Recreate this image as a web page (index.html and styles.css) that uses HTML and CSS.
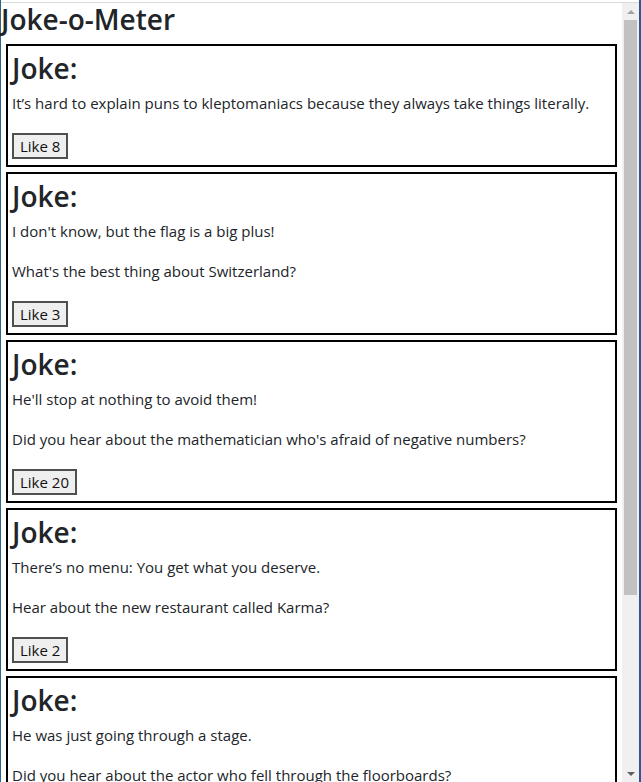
FILE: index.html
```html
<!DOCTYPE html>
<html lang="en">
<head>
<meta charset="utf-8">
<title>Joke-o-Meter</title>
<link rel="stylesheet" href="styles.css">
</head>
<body>
<div class="window">
  <div class="window-body">
    <main class="content">
      <h1 class="app-title">Joke-o-Meter</h1>
      <section class="joke">
        <h2 class="joke-title">Joke:</h2>
        <p class="joke-text">It’s hard to explain puns to kleptomaniacs because they always take things literally.</p>
        <button class="like-btn">Like 8</button>
      </section>
      <section class="joke">
        <h2 class="joke-title">Joke:</h2>
        <p class="joke-text">I don't know, but the flag is a big plus!</p>
        <p class="joke-text">What's the best thing about Switzerland?</p>
        <button class="like-btn">Like 3</button>
      </section>
      <section class="joke">
        <h2 class="joke-title">Joke:</h2>
        <p class="joke-text">He'll stop at nothing to avoid them!</p>
        <p class="joke-text">Did you hear about the mathematician who's afraid of negative numbers?</p>
        <button class="like-btn">Like 20</button>
      </section>
      <section class="joke">
        <h2 class="joke-title">Joke:</h2>
        <p class="joke-text">There’s no menu: You get what you deserve.</p>
        <p class="joke-text">Hear about the new restaurant called Karma?</p>
        <button class="like-btn">Like 2</button>
      </section>
      <section class="joke">
        <h2 class="joke-title">Joke:</h2>
        <p class="joke-text">He was just going through a stage.</p>
        <p class="joke-text">Did you hear about the actor who fell through the floorboards?</p>
        <button class="like-btn">Like 5</button>
      </section>
    </main>
    <div class="scrollbar" aria-hidden="true">
      <div class="sb-arrow"><span class="tri-up"></span></div>
      <div class="sb-track">
        <div class="sb-thumb"></div>
      </div>
      <div class="sb-arrow"><span class="tri-down"></span></div>
    </div>
  </div>
</div>
</body>
</html>
```

FILE: styles.css
```css
html, body {
  margin: 0;
  padding: 0;
  background: #ffffff;
}

body {
  height: 782px;
  overflow: hidden;
}

.window {
  box-sizing: border-box;
  height: 782px;
  display: flex;
  flex-direction: column;
  padding-top: 2px;
  border-left: 1px solid #2e6385;
  border-right: 2px solid #2b579a;
}

.window-body {
  flex: 1;
  min-height: 0;
  display: flex;
  border-top: 1px solid #dadada;
}

.content {
  flex: 1;
  min-width: 0;
  font-family: "Open Sans", "Noto Sans", sans-serif;
  color: #212529;
}

.app-title {
  margin: 0 0 9px 0;
  font-size: 28px;
  font-weight: 600;
  line-height: 32px;
}

.joke {
  border: 2px solid #000;
  margin: 0 5px 5px 5px;
  padding: 4px 4px 6px 4px;
}

.joke-title {
  margin: 0 0 7px 0;
  font-size: 28px;
  font-weight: 600;
  line-height: 36px;
}

.joke-text {
  margin: 0 0 20px 0;
  font-size: 15px;
  line-height: 20px;
}

.like-btn {
  display: block;
  font-family: "Open Sans", "Noto Sans", sans-serif;
  font-size: 15px;
  line-height: 20px;
  color: #111;
  background: #efefef;
  border: 2px solid #505050;
  border-radius: 0;
  padding: 1px 6px;
  margin: 0;
}

.scrollbar {
  width: 17px;
  flex: none;
  display: flex;
  flex-direction: column;
  background: #f0f0f0;
}

.sb-arrow {
  height: 17px;
  flex: none;
  display: flex;
  align-items: center;
  justify-content: center;
}

.tri-up {
  width: 0;
  height: 0;
  border-left: 4px solid transparent;
  border-right: 4px solid transparent;
  border-bottom: 4px solid #a3a3a3;
}

.tri-down {
  width: 0;
  height: 0;
  border-left: 4px solid transparent;
  border-right: 4px solid transparent;
  border-top: 4px solid #606060;
}

.sb-track {
  flex: 1;
  display: flex;
  flex-direction: column;
  padding: 0 2px;
}

.sb-thumb {
  height: 575px;
  background: #c1c1c1;
}
```
